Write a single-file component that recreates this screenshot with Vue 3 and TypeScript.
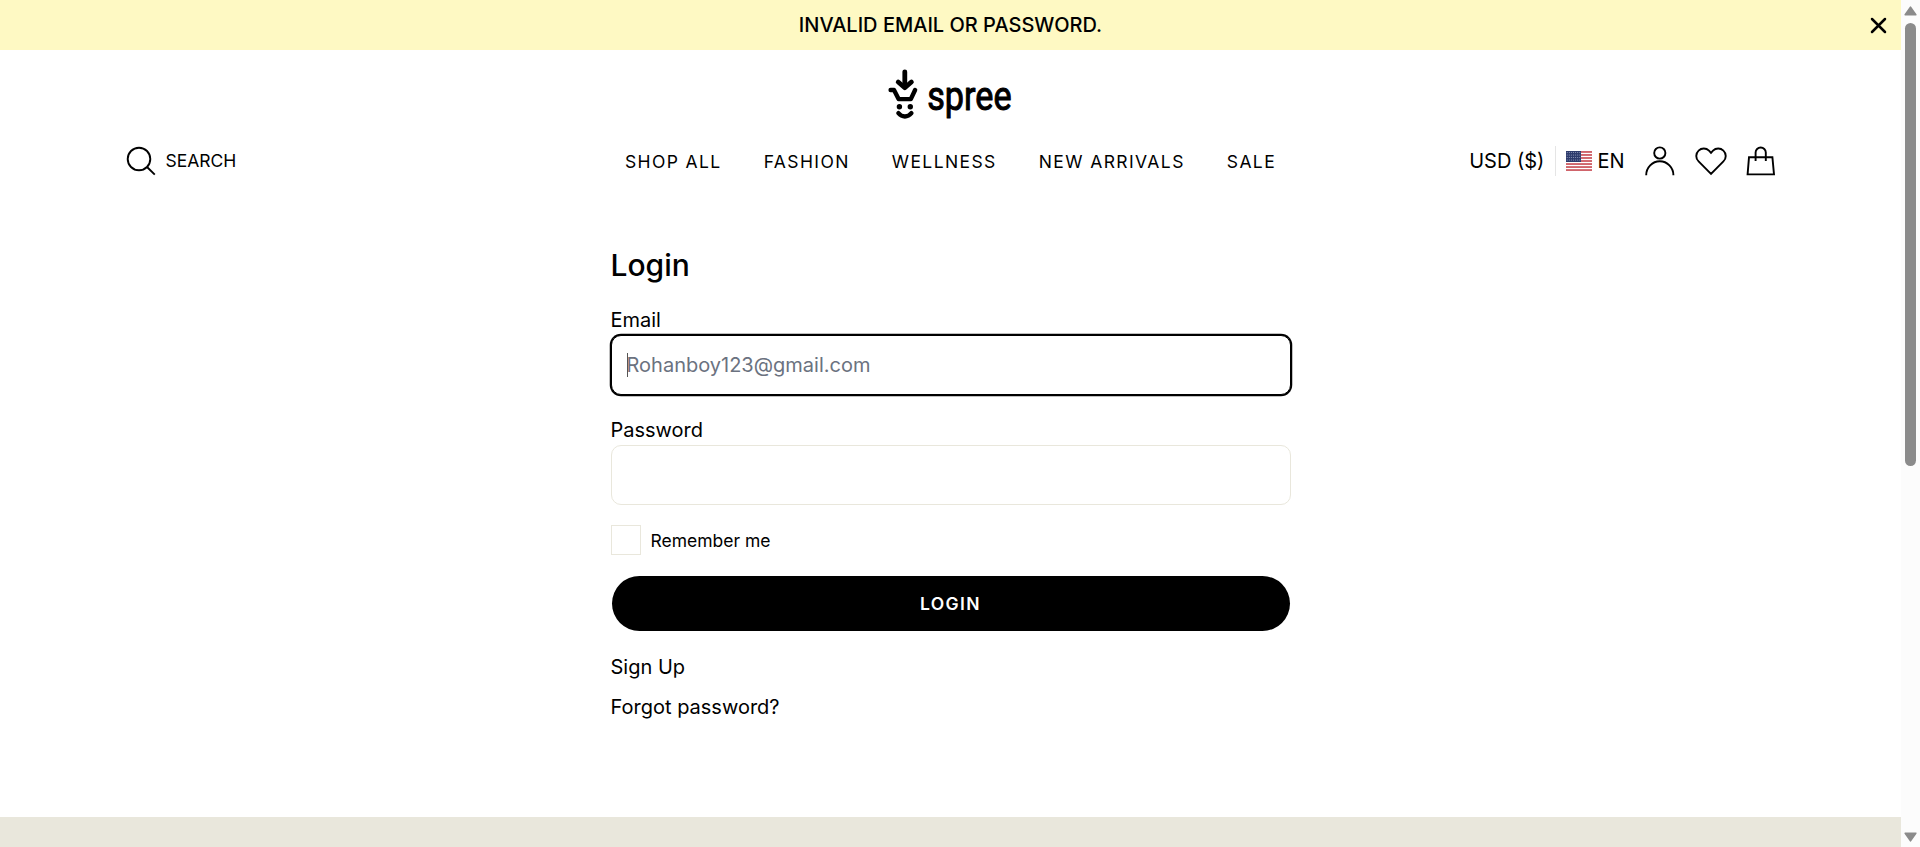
<script setup lang="ts">
import { ref } from 'vue'

const navItems: string[] = ['Shop All', 'Fashion', 'Wellness', 'New Arrivals', 'Sale']
const email = ref('')
const password = ref('')
const remember = ref(false)

const stripes = [0, 1, 2, 3, 4, 5, 6]
const stars = Array.from({ length: 28 }, (_, i) => ({
  x: 1.2 + (i % 7) * 2.1,
  y: 1.5 + Math.floor(i / 7) * 2.5,
}))
</script>

<template>
  <div class="window">
    <div class="page">
      <div class="alert">
        <p>Invalid Email or password.</p>
        <button class="alert-close" aria-label="Close">
          <svg width="17" height="17" viewBox="0 0 17 17">
            <path d="M2 2L15 15M15 2L2 15" fill="none" stroke="#000" stroke-width="2.5" stroke-linecap="round" />
          </svg>
        </button>
      </div>

      <header>
        <a class="logo" aria-label="spree">
          <svg width="126" height="60" viewBox="0 0 126 60">
            <g fill="none" stroke="#000" stroke-width="4.8" stroke-linecap="round" stroke-linejoin="round">
              <path d="M16.8 4.8V19.5" />
              <path d="M10.2 15L16.8 20.8L23.4 15" />
              <path d="M2.6 23H6L10.6 32.1H22.8L27.1 23" stroke-width="4.4" />
              <path d="M10.4 46.2C14.1 50.6 19.7 50.6 23.4 46.2" stroke-width="4.4" />
            </g>
            <circle cx="11.4" cy="39.7" r="2.7" />
            <circle cx="22.3" cy="39.7" r="2.7" />
            <text class="wordmark" x="39.2" y="43" textLength="84.4" lengthAdjust="spacingAndGlyphs">spree</text>
          </svg>
        </a>

        <div class="bar">
          <button class="search">
            <svg width="30" height="30" viewBox="0 0 30 30">
              <g fill="none" stroke="#000" stroke-width="1.9">
                <circle cx="13" cy="13" r="11.3" />
                <path d="M21 21L28.8 28.6" />
              </g>
            </svg>
            <span>Search</span>
          </button>

          <nav>
            <a v-for="item in navItems" :key="item">{{ item }}</a>
          </nav>

          <div class="actions">
            <span class="currency">USD ($)</span>
            <span class="locale">
              <svg class="flag" width="26" height="20" viewBox="0 0 26 20">
                <rect width="26" height="20" fill="#fff" />
                <rect v-for="s in stripes" :key="s" x="0" :y="s * 3.02" width="26" height="1.9" fill="#d0646b" />
                <rect width="15" height="11" fill="#2e3c6d" />
                <circle v-for="(p, i) in stars" :key="i" :cx="p.x" :cy="p.y" r=".5" fill="#a3abc8" />
              </svg>
              EN
            </span>
            <svg class="user" width="30" height="30" viewBox="0 0 30 30">
              <g fill="none" stroke="#000" stroke-width="1.9">
                <circle cx="14.8" cy="7" r="5.6" />
                <path d="M1.2 29.2A13.6 13.9 0 0 1 28.4 29.2" />
              </g>
            </svg>
            <svg class="heart" width="32" height="30" viewBox="0 0 32 30">
              <path
                d="M16 27.8L3.6 15.4A7.4 7.4 0 0 1 3.6 4.6A7.4 7.4 0 0 1 14 4.6L16 6.8L18 4.6A7.4 7.4 0 0 1 28.4 4.6A7.4 7.4 0 0 1 28.4 15.4Z"
                fill="none" stroke="#000" stroke-width="1.9"
              />
            </svg>
            <svg class="bag" width="30" height="30" viewBox="0 0 30 30">
              <g fill="none" stroke="#000" stroke-width="1.9">
                <path d="M3 11.2H26.4L28 28.4H1.6Z" />
                <path d="M9.6 15V6.6A5.1 5.1 0 0 1 19.8 6.6V15" />
              </g>
            </svg>
          </div>
        </div>
      </header>

      <main>
        <form @submit.prevent>
          <h1>Login</h1>
          <label for="email">Email</label>
          <div class="field">
            <input id="email" v-model="email" class="active" type="email" placeholder="Rohanboy123@gmail.com" />
            <i class="caret"></i>
          </div>
          <label for="password">Password</label>
          <div class="field">
            <input id="password" v-model="password" type="password" />
          </div>
          <label class="remember">
            <input v-model="remember" type="checkbox" />
            <span>Remember me</span>
          </label>
          <button class="submit" type="submit">Login</button>
          <a class="link">Sign Up</a>
          <a class="link">Forgot password?</a>
        </form>
      </main>

      <footer></footer>
    </div>

    <div class="scrollbar">
      <svg width="13" height="10" viewBox="0 0 13 10"><path d="M6.5 1.2L11.8 8.8H1.2Z" fill="#8b8b8b" stroke="#8b8b8b" stroke-width="1.6" stroke-linejoin="round" /></svg>
      <div class="thumb"></div>
      <svg class="down" width="13" height="10" viewBox="0 0 13 10"><path d="M6.5 8.8L11.8 1.2H1.2Z" fill="#8b8b8b" stroke="#8b8b8b" stroke-width="1.6" stroke-linejoin="round" /></svg>
    </div>
  </div>
</template>

<style scoped>
.window {
  display: flex;
  height: 847px;
  overflow: hidden;
  background: #fff;
  color: #000;
  font-family: Inter, "Liberation Sans", sans-serif;
  font-size: 20px;
  line-height: 30px;
}
.window * {
  box-sizing: border-box;
}
button {
  padding: 0;
  border: 0;
  background: none;
  color: inherit;
  font: inherit;
}
svg {
  display: block;
  flex: none;
}
.page {
  display: flex;
  flex-direction: column;
  width: 1901px;
}
.alert {
  display: grid;
  grid-template-columns: 50px 1fr 50px;
  align-items: center;
  flex: none;
  height: 50px;
  background: #fef9c3;
}
.alert p {
  grid-column: 2;
  margin: 0;
  text-align: center;
  text-transform: uppercase;
  font-weight: 500;
}
.alert-close {
  margin: 1px 0 0 19px;
}
header {
  flex: none;
  height: 161px;
  padding-top: 17px;
}
.logo {
  display: block;
  width: 126px;
  margin: 0 auto;
}
.logo svg {
  overflow: visible;
}
.wordmark {
  font-family: Roboto, sans-serif;
  font-size: 40px;
  font-weight: 400;
  stroke: #000;
  stroke-width: 1px;
  stroke-linejoin: round;
}
.bar {
  display: grid;
  grid-template-columns: 1fr auto 1fr;
  align-items: center;
  height: 60px;
  margin-top: 4px;
  padding: 0 125px 0 126px;
}
.search {
  display: flex;
  align-items: center;
  gap: 9.5px;
  font-size: 17.5px;
  text-transform: uppercase;
}
nav {
  display: flex;
  gap: 42px;
  margin-left: -1px;
  padding-top: 1px;
  font-size: 17.5px;
  letter-spacing: 1.4px;
  text-transform: uppercase;
}
.actions {
  display: flex;
  align-items: center;
  justify-content: flex-end;
}
.locale {
  display: flex;
  align-items: center;
  gap: 5px;
  margin-left: 11px;
  padding-left: 10px;
  border-left: 1px solid #e5e5e5;
}
.user {
  margin-left: 20.5px;
}
.heart {
  margin-left: 20px;
}
.bag {
  margin-left: 19px;
}
main {
  flex: none;
  height: 606px;
}
form {
  display: flex;
  flex-direction: column;
  width: 680px;
  margin: 0 auto;
  padding-top: 34px;
}
h1 {
  margin: 0 0 20px;
  font-size: 30px;
  font-weight: 500;
  line-height: 40px;
}
.field {
  position: relative;
  margin-bottom: 20px;
}
.field input {
  display: block;
  width: 100%;
  height: 60px;
  padding: 0 15px;
  border: 1px solid #e9e7dc;
  border-radius: 10px;
  outline: none;
  background: #fff;
  color: #000;
  font: inherit;
}
.field input::placeholder {
  color: #6b7280;
  opacity: 1;
}
.field .active {
  border-color: #000;
  box-shadow: 0 0 0 1.25px #000;
}
.caret {
  position: absolute;
  top: 18px;
  left: 16px;
  width: 1px;
  height: 24px;
  background: #555;
}
.remember {
  display: flex;
  align-items: center;
  gap: 10px;
  height: 30px;
  font-size: 17.5px;
}
.remember span {
  padding-top: 1px;
}
.remember input {
  width: 30px;
  height: 30px;
  margin: 0;
  border: 1px solid #e9e7dc;
  appearance: none;
}
.submit {
  height: 55px;
  margin: 21px 1px 21px;
  border-radius: 28px;
  background: #000;
  color: #fff;
  font-size: 17.5px;
  font-weight: 600;
  letter-spacing: 1.4px;
  text-transform: uppercase;
}
.link {
  margin-bottom: 10px;
}
footer {
  flex: 1;
  background: #e9e7dc;
}
.scrollbar {
  display: flex;
  flex-direction: column;
  align-items: center;
  width: 19px;
  padding: 6px 0 5px;
  background: #fcfcfc;
}
.thumb {
  width: 11px;
  height: 443px;
  margin-top: 7px;
  border-radius: 6px;
  background: #8b8b8b;
}
.down {
  margin-top: auto;
}
</style>

<style>
body {
  overflow: hidden;
}
</style>
